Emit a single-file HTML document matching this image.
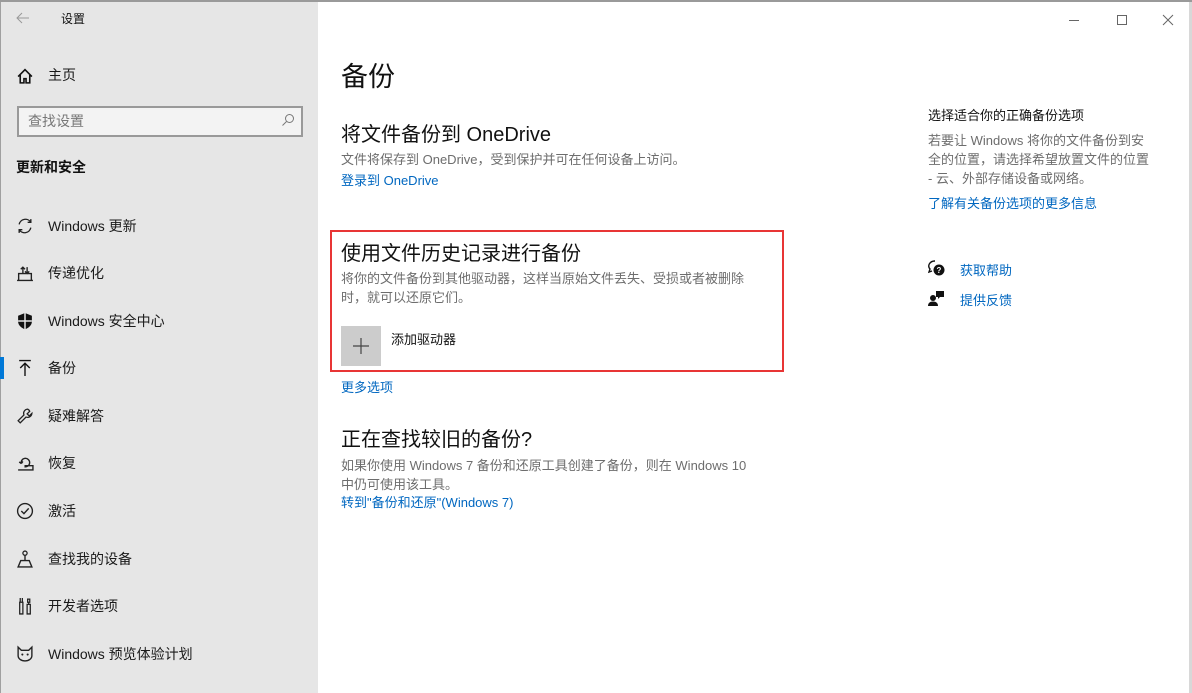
<!DOCTYPE html>
<html><head><meta charset="utf-8"><style>
*{margin:0;padding:0;box-sizing:border-box}
body{width:1192px;height:693px;overflow:hidden;background:#d8d8d8;font-family:"Liberation Sans","Noto Sans CJK SC",sans-serif;position:relative}
.a{position:absolute;white-space:nowrap}
#side{position:absolute;left:0;top:0;width:318px;height:693px;background:#e6e6e6}
#main{position:absolute;left:318px;top:2px;width:871px;height:691px;background:#fff}
.nav{position:absolute;left:48px;font-size:14px;color:#1a1a1a}
.ic{position:absolute;left:16px;width:18px;height:18px}
.g{color:#6d6d6d;font-size:13px;line-height:19px}
.l{color:#0067c0;font-size:13px}
h2{font-weight:normal;font-size:20px;color:#111}
</style></head><body>
<div id="side">
 <div class="a" style="left:0;top:0;width:1px;height:693px;background:#a0a0a0"></div>
 <svg class="a" style="left:16px;top:12px" width="14" height="12" viewBox="0 0 14 12"><path d="M13 6H1M6 1L1 6l5 5" fill="none" stroke="#999" stroke-width="1"/></svg>
 <div class="a" style="left:61px;top:10px;font-size:12px;color:#111">设置</div>
 <svg class="ic" style="top:67px" viewBox="0 0 17 17"><path d="M2 9L8.5 2.5 15 9M4 7.5V15h3.5v-4h2v4H13V7.5" fill="none" stroke="#111" stroke-width="1.5"/></svg>
 <div class="nav" style="top:65px">主页</div>
 <div class="a" style="left:17px;top:106px;width:286px;height:31px;border:2px solid #999;background:#f3f3f3"></div>
 <div class="a" style="left:28px;top:111px;font-size:14px;color:#777">查找设置</div>
 <svg class="a" style="left:281px;top:113px" width="14" height="14" viewBox="0 0 14 14"><circle cx="8.5" cy="5.5" r="4" fill="none" stroke="#777"/><path d="M5.5 8.5L1.5 12.5" stroke="#777"/></svg>
 <div class="a" style="left:16px;top:157px;font-size:14px;font-weight:bold;color:#111">更新和安全</div>

 <svg class="ic" style="top:217px" viewBox="0 0 17 17"><path d="M3 7a6 6 0 0 1 11-2M14 10a6 6 0 0 1-11 2M14 2v3h-3M3 15v-3h3" fill="none" stroke="#222" stroke-width="1.3"/></svg>
 <div class="nav" style="top:216px">Windows 更新</div>
 <svg class="ic" style="top:264px" viewBox="0 0 17 17"><path d="M1 15.5h15M2.5 15V9h12v6M6.5 3v6M4.5 5l2-2 2 2M10.5 9V3M8.5 7l2 2 2-2" fill="none" stroke="#222" stroke-width="1.3"/></svg>
 <div class="nav" style="top:263px">传递优化</div>
 <svg class="ic" style="top:312px" viewBox="0 0 17 17"><path d="M8.5 1L2 3.5V9c0 3.5 3 6 6.5 7.5C12 15 15 12.5 15 9V3.5z" fill="#111"/><path d="M8.5 1v15.5M2 8.5h13" stroke="#e6e6e6" stroke-width="1.4"/></svg>
 <div class="nav" style="top:311px">Windows 安全中心</div>
 <div class="a" style="left:0;top:357px;width:4px;height:22px;background:#0078d7"></div>
 <svg class="ic" style="top:359px" viewBox="0 0 17 17"><path d="M3 1.5h11M8.5 4v12M4 8.5l4.5-4.5 4.5 4.5" fill="none" stroke="#111" stroke-width="1.3"/></svg>
 <div class="nav" style="top:358px">备份</div>
 <svg class="ic" style="top:407px" viewBox="0 0 17 17"><path d="M11 2a4 4 0 0 0-3.5 5.5L2 13l2 2 5.5-5.5A4 4 0 0 0 15 6l-2.5 2.5-2-2L13 4a4 4 0 0 0-2-2z" fill="none" stroke="#222" stroke-width="1.2"/></svg>
 <div class="nav" style="top:406px">疑难解答</div>
 <svg class="ic" style="top:454px" viewBox="0 0 17 17"><path d="M2 15h14v-4H8M5 9a4 4 0 1 1 3 3M5 9l-2-1.5M5 9l1.5-2" fill="none" stroke="#222" stroke-width="1.3"/></svg>
 <div class="nav" style="top:453px">恢复</div>
 <svg class="ic" style="top:502px" viewBox="0 0 17 17"><circle cx="8.5" cy="8.5" r="7" fill="none" stroke="#222" stroke-width="1.3"/><path d="M5 8.5l2.5 2.5 4.5-5" fill="none" stroke="#222" stroke-width="1.3"/></svg>
 <div class="nav" style="top:501px">激活</div>
 <svg class="ic" style="top:550px" viewBox="0 0 17 17"><circle cx="8.5" cy="3" r="2" fill="none" stroke="#222" stroke-width="1.2"/><path d="M8.5 5v5M2 16l2.5-6h8l2.5 6z" fill="none" stroke="#222" stroke-width="1.3"/></svg>
 <div class="nav" style="top:549px">查找我的设备</div>
 <svg class="ic" style="top:597px" viewBox="0 0 17 17"><path d="M4 1v4M6 1v4M3.5 5h3v11h-3zM11 2h2v3h-2zM12 5v2M10.5 7h3v9h-3z" fill="none" stroke="#222" stroke-width="1.2"/></svg>
 <div class="nav" style="top:596px">开发者选项</div>
 <svg class="ic" style="top:645px" viewBox="0 0 17 17"><path d="M2 2l3 3h7l3-3v8c0 3-3 5-6.5 5S2 13 2 10z" fill="none" stroke="#222" stroke-width="1.3"/><circle cx="6" cy="9" r="1" fill="#222"/><circle cx="11" cy="9" r="1" fill="#222"/></svg>
 <div class="nav" style="top:644px">Windows 预览体验计划</div>
</div>
<div style="position:absolute;left:0;top:0;width:1192px;height:2px;background:#9a9a9a"></div>
<div id="main">
 <svg class="a" style="left:751px;top:11px" width="110" height="14" viewBox="0 0 110 14"><path d="M0 7.5h10" stroke="#666"/><rect x="48.5" y="2.5" width="9" height="9" fill="none" stroke="#666"/><path d="M94 2l10 10M104 2L94 12" stroke="#666"/></svg>
 <div class="a" style="left:23px;top:53px;font-size:27px;color:#111">备份</div>
 <h2 class="a" style="left:23px;top:116px">将文件备份到 OneDrive</h2>
 <div class="a g" style="left:23px;top:148px">文件将保存到 OneDrive，受到保护并可在任何设备上访问。</div>
 <div class="a l" style="left:23px;top:168px">登录到 OneDrive</div>
 <div class="a" style="left:12px;top:228px;width:454px;height:142px;border:2px solid #e83535"></div>
 <h2 class="a" style="left:23px;top:235px">使用文件历史记录进行备份</h2>
 <div class="a g" style="left:23px;top:267px">将你的文件备份到其他驱动器，这样当原始文件丢失、受损或者被删除<br>时，就可以还原它们。</div>
 <div class="a" style="left:23px;top:324px;width:40px;height:40px;background:#ccc"></div>
 <svg class="a" style="left:34px;top:335px" width="18" height="18" viewBox="0 0 18 18"><path d="M9 1v16M1 9h16" stroke="#444" stroke-width="1.2"/></svg>
 <div class="a" style="left:73px;top:327px;font-size:13px;color:#111">添加驱动器</div>
 <div class="a l" style="left:23px;top:375px">更多选项</div>
 <h2 class="a" style="left:23px;top:421px">正在查找较旧的备份?</h2>
 <div class="a g" style="left:23px;top:454px">如果你使用 Windows 7 备份和还原工具创建了备份，则在 Windows 10<br>中仍可使用该工具。</div>
 <div class="a l" style="left:23px;top:490px">转到"备份和还原"(Windows 7)</div>

 <div class="a" style="left:610px;top:103px;font-size:13px;color:#111">选择适合你的正确备份选项</div>
 <div class="a g" style="left:610px;top:129px">若要让 Windows 将你的文件备份到安<br>全的位置，请选择希望放置文件的位置<br>- 云、外部存储设备或网络。</div>
 <div class="a l" style="left:610px;top:191px">了解有关备份选项的更多信息</div>
 <svg class="a" style="left:610px;top:258px" width="17" height="17" viewBox="0 0 17 17"><path d="M7 1a6 5 0 0 0-5 8l-1 3 3-1" fill="none" stroke="#111" stroke-width="1.4"/><circle cx="11" cy="10" r="5.5" fill="#111"/><text x="11" y="13" font-size="8" fill="#fff" text-anchor="middle" font-family="Liberation Sans" font-weight="bold">?</text></svg>
 <div class="a l" style="left:642px;top:258px">获取帮助</div>
 <svg class="a" style="left:610px;top:288px" width="17" height="17" viewBox="0 0 17 17"><circle cx="5" cy="8" r="3" fill="#111"/><path d="M0 16c0-3 2-4.5 5-4.5s5 1.5 5 4.5z" fill="#111"/><path d="M8 1h8v6h-4l-2 2V7H8z" fill="#111"/></svg>
 <div class="a l" style="left:642px;top:288px">提供反馈</div>
</div>
</body></html>
